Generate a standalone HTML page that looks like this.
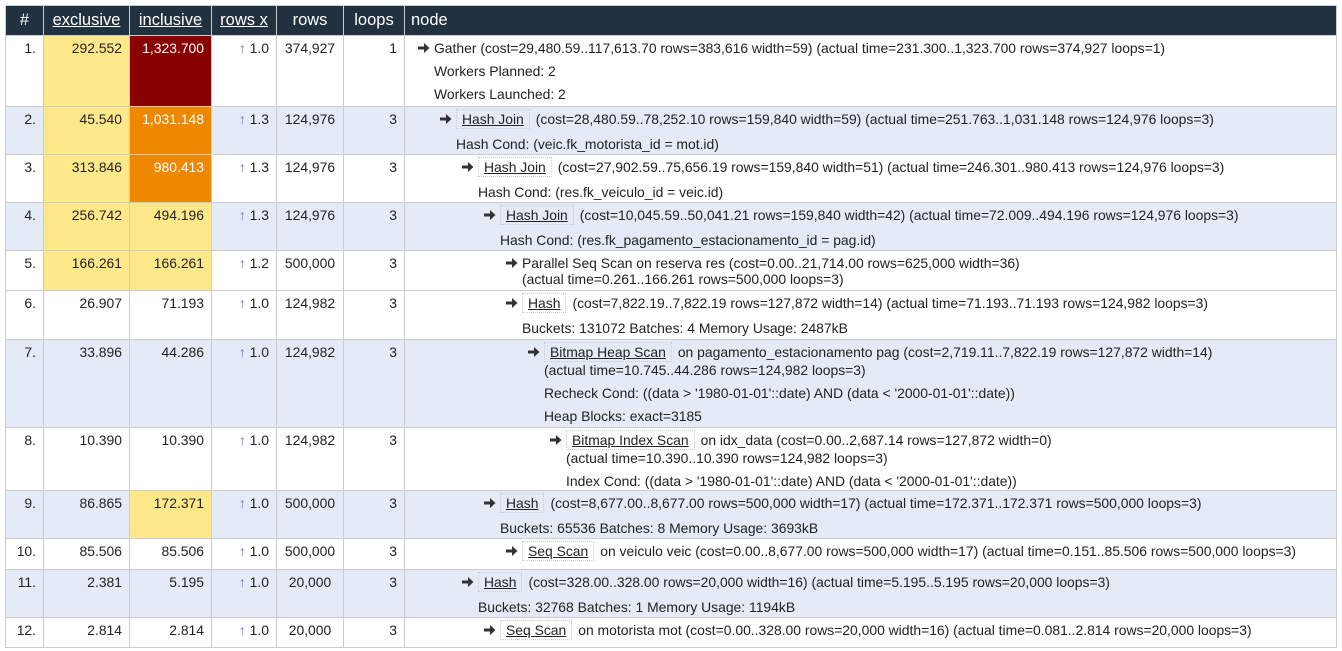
<!DOCTYPE html>
<html><head><meta charset="utf-8"><style>
body{margin:0;background:#fff;font-family:"Liberation Sans",Arial,sans-serif;font-size:13.9px;color:#222;}
table{position:absolute;left:5px;top:5px;width:1332px;border-collapse:collapse;table-layout:fixed;}
th{background:#22313f;color:#fff;font-weight:normal;font-size:16.5px;height:29px;padding:0 6px;border:1px solid #ccc;text-align:center;}
th.l{text-align:left;}
th u{text-decoration:underline;}
td{border:1px solid #ccc;vertical-align:top;padding:4px 7px 0 6px;line-height:16px;text-align:right;overflow:hidden;white-space:nowrap;}
td.n{text-align:left;padding-left:0;}
tr.b td{background:#e4ebf6;}
td.y{background:#fee88a!important;}
td.r{background:#880000!important;color:#fff;}
td.o{background:#ee8800!important;color:#fff;}
td.c{text-align:center;padding:4px 0 0 0;}
.up{color:#6a6acf;}
.ln{display:flex;align-items:flex-start;}
.ar{width:16px;flex:none;padding-top:3px;}
.d{margin-top:7px;}
.k{border:1px dotted #ccc;padding:1px 5px;margin:-2px 6px 0 0;text-decoration:underline;display:inline-block;line-height:16px;}
</style></head><body>
<table>
<colgroup><col style="width:38px"><col style="width:86px"><col style="width:82px"><col style="width:65px"><col style="width:67px"><col style="width:61px"><col></colgroup>
<tr><th>#</th><th><u>exclusive</u></th><th><u>inclusive</u></th><th><u>rows x</u></th><th>rows</th><th>loops</th><th class="l">node</th></tr>

<tr style="height:71px"><td>1.</td><td class="y">292.552</td><td class="r">1,323.700</td><td><span class="up">↑</span> 1.0</td><td class="c">374,927</td><td>1</td>
<td class="n"><div style="margin-left:13px"><div class="ln"><svg class="ar" viewBox="0 0 16 10" height="10"><path d="M0 3.5h6V0l5.5 5L6 10V6.5H0z" fill="#333"/></svg><div>Gather (cost=29,480.59..117,613.70 rows=383,616 width=59) (actual time=231.300..1,323.700 rows=374,927 loops=1)</div></div><div style="margin-left:16px"><div class="d">Workers Planned: 2</div><div class="d">Workers Launched: 2</div></div></div></td></tr>

<tr class="b" style="height:48px"><td>2.</td><td class="y">45.540</td><td class="o">1,031.148</td><td><span class="up">↑</span> 1.3</td><td class="c">124,976</td><td>3</td>
<td class="n"><div style="margin-left:35px"><div class="ln"><svg class="ar" viewBox="0 0 16 10" height="10"><path d="M0 3.5h6V0l5.5 5L6 10V6.5H0z" fill="#333"/></svg><div><span class="k">Hash Join</span>(cost=28,480.59..78,252.10 rows=159,840 width=59) (actual time=251.763..1,031.148 rows=124,976 loops=3)</div></div><div style="margin-left:16px"><div class="d">Hash Cond: (veic.fk_motorista_id = mot.id)</div></div></div></td></tr>

<tr style="height:48px"><td>3.</td><td class="y">313.846</td><td class="o">980.413</td><td><span class="up">↑</span> 1.3</td><td class="c">124,976</td><td>3</td>
<td class="n"><div style="margin-left:57px"><div class="ln"><svg class="ar" viewBox="0 0 16 10" height="10"><path d="M0 3.5h6V0l5.5 5L6 10V6.5H0z" fill="#333"/></svg><div><span class="k">Hash Join</span>(cost=27,902.59..75,656.19 rows=159,840 width=51) (actual time=246.301..980.413 rows=124,976 loops=3)</div></div><div style="margin-left:16px"><div class="d">Hash Cond: (res.fk_veiculo_id = veic.id)</div></div></div></td></tr>

<tr class="b" style="height:48px"><td>4.</td><td class="y">256.742</td><td class="y">494.196</td><td><span class="up">↑</span> 1.3</td><td class="c">124,976</td><td>3</td>
<td class="n"><div style="margin-left:79px"><div class="ln"><svg class="ar" viewBox="0 0 16 10" height="10"><path d="M0 3.5h6V0l5.5 5L6 10V6.5H0z" fill="#333"/></svg><div><span class="k">Hash Join</span>(cost=10,045.59..50,041.21 rows=159,840 width=42) (actual time=72.009..494.196 rows=124,976 loops=3)</div></div><div style="margin-left:16px"><div class="d">Hash Cond: (res.fk_pagamento_estacionamento_id = pag.id)</div></div></div></td></tr>

<tr style="height:40px"><td>5.</td><td class="y">166.261</td><td class="y">166.261</td><td><span class="up">↑</span> 1.2</td><td class="c">500,000</td><td>3</td>
<td class="n"><div style="margin-left:101px"><div class="ln"><svg class="ar" viewBox="0 0 16 10" height="10"><path d="M0 3.5h6V0l5.5 5L6 10V6.5H0z" fill="#333"/></svg><div>Parallel Seq Scan on reserva res (cost=0.00..21,714.00 rows=625,000 width=36)<br>(actual time=0.261..166.261 rows=500,000 loops=3)</div></div></div></td></tr>

<tr style="height:49px"><td>6.</td><td>26.907</td><td>71.193</td><td><span class="up">↑</span> 1.0</td><td class="c">124,982</td><td>3</td>
<td class="n"><div style="margin-left:101px"><div class="ln"><svg class="ar" viewBox="0 0 16 10" height="10"><path d="M0 3.5h6V0l5.5 5L6 10V6.5H0z" fill="#333"/></svg><div><span class="k">Hash</span>(cost=7,822.19..7,822.19 rows=127,872 width=14) (actual time=71.193..71.193 rows=124,982 loops=3)</div></div><div style="margin-left:16px"><div class="d">Buckets: 131072 Batches: 4 Memory Usage: 2487kB</div></div></div></td></tr>

<tr class="b" style="height:88px"><td>7.</td><td>33.896</td><td>44.286</td><td><span class="up">↑</span> 1.0</td><td class="c">124,982</td><td>3</td>
<td class="n"><div style="margin-left:123px"><div class="ln"><svg class="ar" viewBox="0 0 16 10" height="10"><path d="M0 3.5h6V0l5.5 5L6 10V6.5H0z" fill="#333"/></svg><div><span class="k">Bitmap Heap Scan</span>on pagamento_estacionamento pag (cost=2,719.11..7,822.19 rows=127,872 width=14)<br>(actual time=10.745..44.286 rows=124,982 loops=3)</div></div><div style="margin-left:16px"><div class="d">Recheck Cond: ((data &gt; '1980-01-01'::date) AND (data &lt; '2000-01-01'::date))</div><div class="d">Heap Blocks: exact=3185</div></div></div></td></tr>

<tr style="height:63px"><td>8.</td><td>10.390</td><td>10.390</td><td><span class="up">↑</span> 1.0</td><td class="c">124,982</td><td>3</td>
<td class="n"><div style="margin-left:145px"><div class="ln"><svg class="ar" viewBox="0 0 16 10" height="10"><path d="M0 3.5h6V0l5.5 5L6 10V6.5H0z" fill="#333"/></svg><div><span class="k">Bitmap Index Scan</span>on idx_data (cost=0.00..2,687.14 rows=127,872 width=0)<br>(actual time=10.390..10.390 rows=124,982 loops=3)</div></div><div style="margin-left:16px"><div class="d">Index Cond: ((data &gt; '1980-01-01'::date) AND (data &lt; '2000-01-01'::date))</div></div></div></td></tr>

<tr class="b" style="height:48px"><td>9.</td><td>86.865</td><td class="y">172.371</td><td><span class="up">↑</span> 1.0</td><td class="c">500,000</td><td>3</td>
<td class="n"><div style="margin-left:79px"><div class="ln"><svg class="ar" viewBox="0 0 16 10" height="10"><path d="M0 3.5h6V0l5.5 5L6 10V6.5H0z" fill="#333"/></svg><div><span class="k">Hash</span>(cost=8,677.00..8,677.00 rows=500,000 width=17) (actual time=172.371..172.371 rows=500,000 loops=3)</div></div><div style="margin-left:16px"><div class="d">Buckets: 65536 Batches: 8 Memory Usage: 3693kB</div></div></div></td></tr>

<tr style="height:31px"><td>10.</td><td>85.506</td><td>85.506</td><td><span class="up">↑</span> 1.0</td><td class="c">500,000</td><td>3</td>
<td class="n"><div style="margin-left:101px"><div class="ln"><svg class="ar" viewBox="0 0 16 10" height="10"><path d="M0 3.5h6V0l5.5 5L6 10V6.5H0z" fill="#333"/></svg><div><span class="k">Seq Scan</span>on veiculo veic (cost=0.00..8,677.00 rows=500,000 width=17) (actual time=0.151..85.506 rows=500,000 loops=3)</div></div></div></td></tr>

<tr class="b" style="height:48px"><td>11.</td><td>2.381</td><td>5.195</td><td><span class="up">↑</span> 1.0</td><td class="c">20,000</td><td>3</td>
<td class="n"><div style="margin-left:57px"><div class="ln"><svg class="ar" viewBox="0 0 16 10" height="10"><path d="M0 3.5h6V0l5.5 5L6 10V6.5H0z" fill="#333"/></svg><div><span class="k">Hash</span>(cost=328.00..328.00 rows=20,000 width=16) (actual time=5.195..5.195 rows=20,000 loops=3)</div></div><div style="margin-left:16px"><div class="d">Buckets: 32768 Batches: 1 Memory Usage: 1194kB</div></div></div></td></tr>

<tr style="height:30px"><td>12.</td><td>2.814</td><td>2.814</td><td><span class="up">↑</span> 1.0</td><td class="c">20,000</td><td>3</td>
<td class="n"><div style="margin-left:79px"><div class="ln"><svg class="ar" viewBox="0 0 16 10" height="10"><path d="M0 3.5h6V0l5.5 5L6 10V6.5H0z" fill="#333"/></svg><div><span class="k">Seq Scan</span>on motorista mot (cost=0.00..328.00 rows=20,000 width=16) (actual time=0.081..2.814 rows=20,000 loops=3)</div></div></div></td></tr>
</table>
</body></html>
